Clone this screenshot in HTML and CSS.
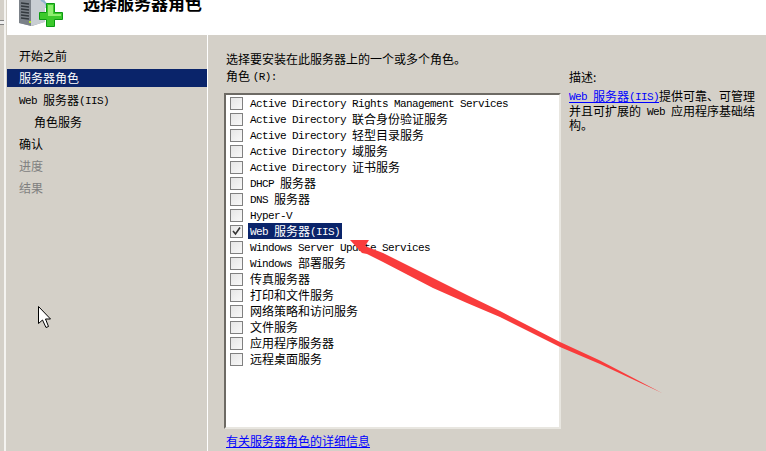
FILE: index.html
```html
<!DOCTYPE html>
<html lang="zh-CN">
<head>
<meta charset="utf-8">
<title>选择服务器角色</title>
<link rel="stylesheet" href="styles.css">
</head>
<body>
<div class="window">
  <div class="edge"><div class="edge-line"></div></div>
  <div class="main">
    <header class="header">
      <svg class="wizard-icon" width="50" height="28" viewBox="0 0 50 28">
        <path d="M0 0 H25 V22 L13 26 L0 23 Z" fill="#9aa0a6"/>
        <path d="M0 0 H12 V26 L0 23 Z" fill="#7b8188"/>
        <path d="M12 0 H26 V22 L12 26 Z" fill="#c9ced3"/>
        <path d="M2 3 L10 4 M2 6 L10 7 M2 9 L10 10 M2 12 L10 13 M2 15 L10 16 M2 18 L10 19" stroke="#33393e" stroke-width="1.3"/>
        <rect x="10" y="21" width="2" height="2" fill="#b6e82a"/>
        <path d="M22 0 Q29 3 27 8" fill="none" stroke="#8fb4d0" stroke-width="2"/>
        <path d="M27.5 3.5 H35.5 V12.5 H43.5 V19.5 H35.5 V26.5 H27.5 V19.5 H20.5 V12.5 H27.5 Z" fill="#3cc92c" stroke="#0b9a12"/>
        <path d="M29 5 H34 V14 H42 V16 H29 Z" fill="#8fee70"/>
      </svg>
      <h1 class="title">选择服务器角色</h1>
    </header>
    <div class="body">
      <nav class="nav">
        <div class="nav-item">开始之前</div>
        <div class="nav-item active">服务器角色</div>
        <div class="nav-item"><span class="lat">Web </span>服务器<span class="lat">(IIS)</span></div>
        <div class="nav-item sub">角色服务</div>
        <div class="nav-item">确认</div>
        <div class="nav-item off">进度</div>
        <div class="nav-item off">结果</div>
      </nav>
      <div class="divider"></div>
      <section class="content">
        <div class="left">
          <p class="intro">选择要安装在此服务器上的一个或多个角色。</p>
          <p class="label">角色 <span class="lat">(R):</span></p>
          <ul class="list">
            <li class="row"><span class="box"></span><span class="text"><span class="lat">Active Directory Rights Management Services</span></span></li>
            <li class="row"><span class="box"></span><span class="text"><span class="lat">Active Directory </span>联合身份验证服务</span></li>
            <li class="row"><span class="box"></span><span class="text"><span class="lat">Active Directory </span>轻型目录服务</span></li>
            <li class="row"><span class="box"></span><span class="text"><span class="lat">Active Directory </span>域服务</span></li>
            <li class="row"><span class="box"></span><span class="text"><span class="lat">Active Directory </span>证书服务</span></li>
            <li class="row"><span class="box"></span><span class="text"><span class="lat">DHCP </span>服务器</span></li>
            <li class="row"><span class="box"></span><span class="text"><span class="lat">DNS </span>服务器</span></li>
            <li class="row"><span class="box"></span><span class="text"><span class="lat">Hyper-V</span></span></li>
            <li class="row"><span class="box"><svg width="13" height="13" viewBox="0 0 13 13"><path d="M3 6 L5.5 9 L10 2.5" fill="none" stroke="#333" stroke-width="1.6"/></svg></span><span class="text selected"><span class="lat">Web </span>服务器<span class="lat">(IIS)</span></span></li>
            <li class="row"><span class="box"></span><span class="text"><span class="lat">Windows Server Update Services</span></span></li>
            <li class="row"><span class="box"></span><span class="text"><span class="lat">Windows </span>部署服务</span></li>
            <li class="row"><span class="box"></span><span class="text">传真服务器</span></li>
            <li class="row"><span class="box"></span><span class="text">打印和文件服务</span></li>
            <li class="row"><span class="box"></span><span class="text">网络策略和访问服务</span></li>
            <li class="row"><span class="box"></span><span class="text">文件服务</span></li>
            <li class="row"><span class="box"></span><span class="text">应用程序服务器</span></li>
            <li class="row"><span class="box"></span><span class="text">远程桌面服务</span></li>
          </ul>
          <a class="link more" href="#">有关服务器角色的详细信息</a>
        </div>
        <aside class="desc">
          <p class="desc-label">描述:</p>
          <p class="desc-text"><a class="link" href="#"><span class="lat">Web </span>服务器<span class="lat">(IIS)</span></a>提供可靠、可管理并且可扩展的<span class="lat"> Web </span>应用程序基础结构。</p>
        </aside>
      </section>
    </div>
  </div>
</div>
<svg class="annot-arrow" width="320" height="165" viewBox="0 0 320 165">
  <path d="M0 2 H19 L15 8 L33 15 L83 40 L117 57 L150 73 L210 104 L250 122.500 L312 155 L250 126 L210 109 L150 79 L117 65 L83 50 L33 24 L17 16 L12 15 Z" fill="#f93c3c"/>
</svg>
<svg class="cursor" width="16" height="24" viewBox="0 0 16 24">
  <path d="M0.500 0.500 V17.500 L4.500 14 L8 21.500 L10.500 20.500 L7.500 13 L12.500 13 Z" fill="#fff" stroke="#000" stroke-width="1"/>
</svg>
</body>
</html>
```
FILE: styles.css
```css
html, body {
  margin: 0;
  padding: 0;
  width: 766px;
  height: 451px;
  overflow: hidden;
  background: #d4d0c8;
  font-family: "Noto Sans CJK SC", "Liberation Mono", monospace;
  font-size: 12px;
  color: #000;
}
p, h1, ul { margin: 0; padding: 0; }
.lat {
  font-family: "Liberation Mono", monospace;
  font-size: 11px;
  letter-spacing: -0.6px;
  line-height: 1;
  vertical-align: 1px;
}
.window { display: flex; height: 451px; }
.edge {
  width: 7px;
  background: linear-gradient(90deg, #d4d0c8 4px, #f4f3f0 4px, #f4f3f0 6px, #d4d0c8 6px);
  flex: none;
  padding-top: 20px;
  box-sizing: border-box;
}
.edge-line {
  width: 4px;
  height: 3px;
  border-top: 1px solid #808080;
  border-bottom: 1px solid #808080;
  background: #eeeeee;
}
.main { flex: 1; display: flex; flex-direction: column; min-width: 0; }
.header {
  height: 35px;
  background: #fff;
  display: flex;
  overflow: hidden;
  flex: none;
}
.wizard-icon { margin: 0 0 0 12px; flex: none; }
.title {
  margin: -9px 0 0 14px;
  font-size: 17px;
  line-height: 24px;
  font-weight: 700;
}
.body { flex: 1; display: flex; min-height: 0; }
.nav { width: 200px; padding-top: 12px; flex: none; }
.nav-item {
  height: 18px;
  line-height: 18px;
  margin-bottom: 4px;
  padding-left: 12px;
  white-space: nowrap;
}
.nav-item.active { background: #0a246a; color: #fff; }
.nav-item.sub { padding-left: 27px; }
.nav-item.off { color: #808080; }
.divider { width: 1px; background: #fff; flex: none; }
.content { flex: 1; display: flex; min-width: 0; }
.left { width: 337px; margin-left: 16px; flex: none; }
.intro { margin: 16px 0 0 2px; line-height: 16px; height: 16px; }
.label { margin: 1px 0 0 2px; line-height: 16px; height: 16px; }
.list {
  list-style: none;
  box-sizing: border-box;
  height: 336px;
  margin-top: 9px;
  padding: 0 0 0 4px;
  background: #fff;
  border-style: solid;
  border-width: 2px;
  border-color: #6d6a64 #e8e6e0 #e8e6e0 #6d6a64;
}
.row { display: flex; align-items: center; height: 16px; }
.box {
  box-sizing: border-box;
  width: 13px;
  height: 13px;
  border: 1px solid #808080;
  background: linear-gradient(135deg, #e6e6e6, #f8f8f8);
  flex: none;
  display: block;
  margin-right: 5px;
}
.box svg { display: block; margin: -1px; }
.text {
  line-height: 16px;
  padding: 0 2px;
  white-space: nowrap;
}
.text.selected { background: #0a246a; color: #fff; }
.link { color: #0000ff; text-decoration: underline; }
.more { display: block; margin: 4px 0 0 2px; line-height: 16px; }
.desc { width: 190px; margin-left: 8px; flex: none; }
.desc-label { margin-top: 34px; line-height: 16px; }
.desc-text { margin-top: 4px; line-height: 14.5px; word-break: break-all; }
.annot-arrow { position: absolute; left: 350px; top: 238px; }
.cursor { position: absolute; left: 38px; top: 306px; }
```
